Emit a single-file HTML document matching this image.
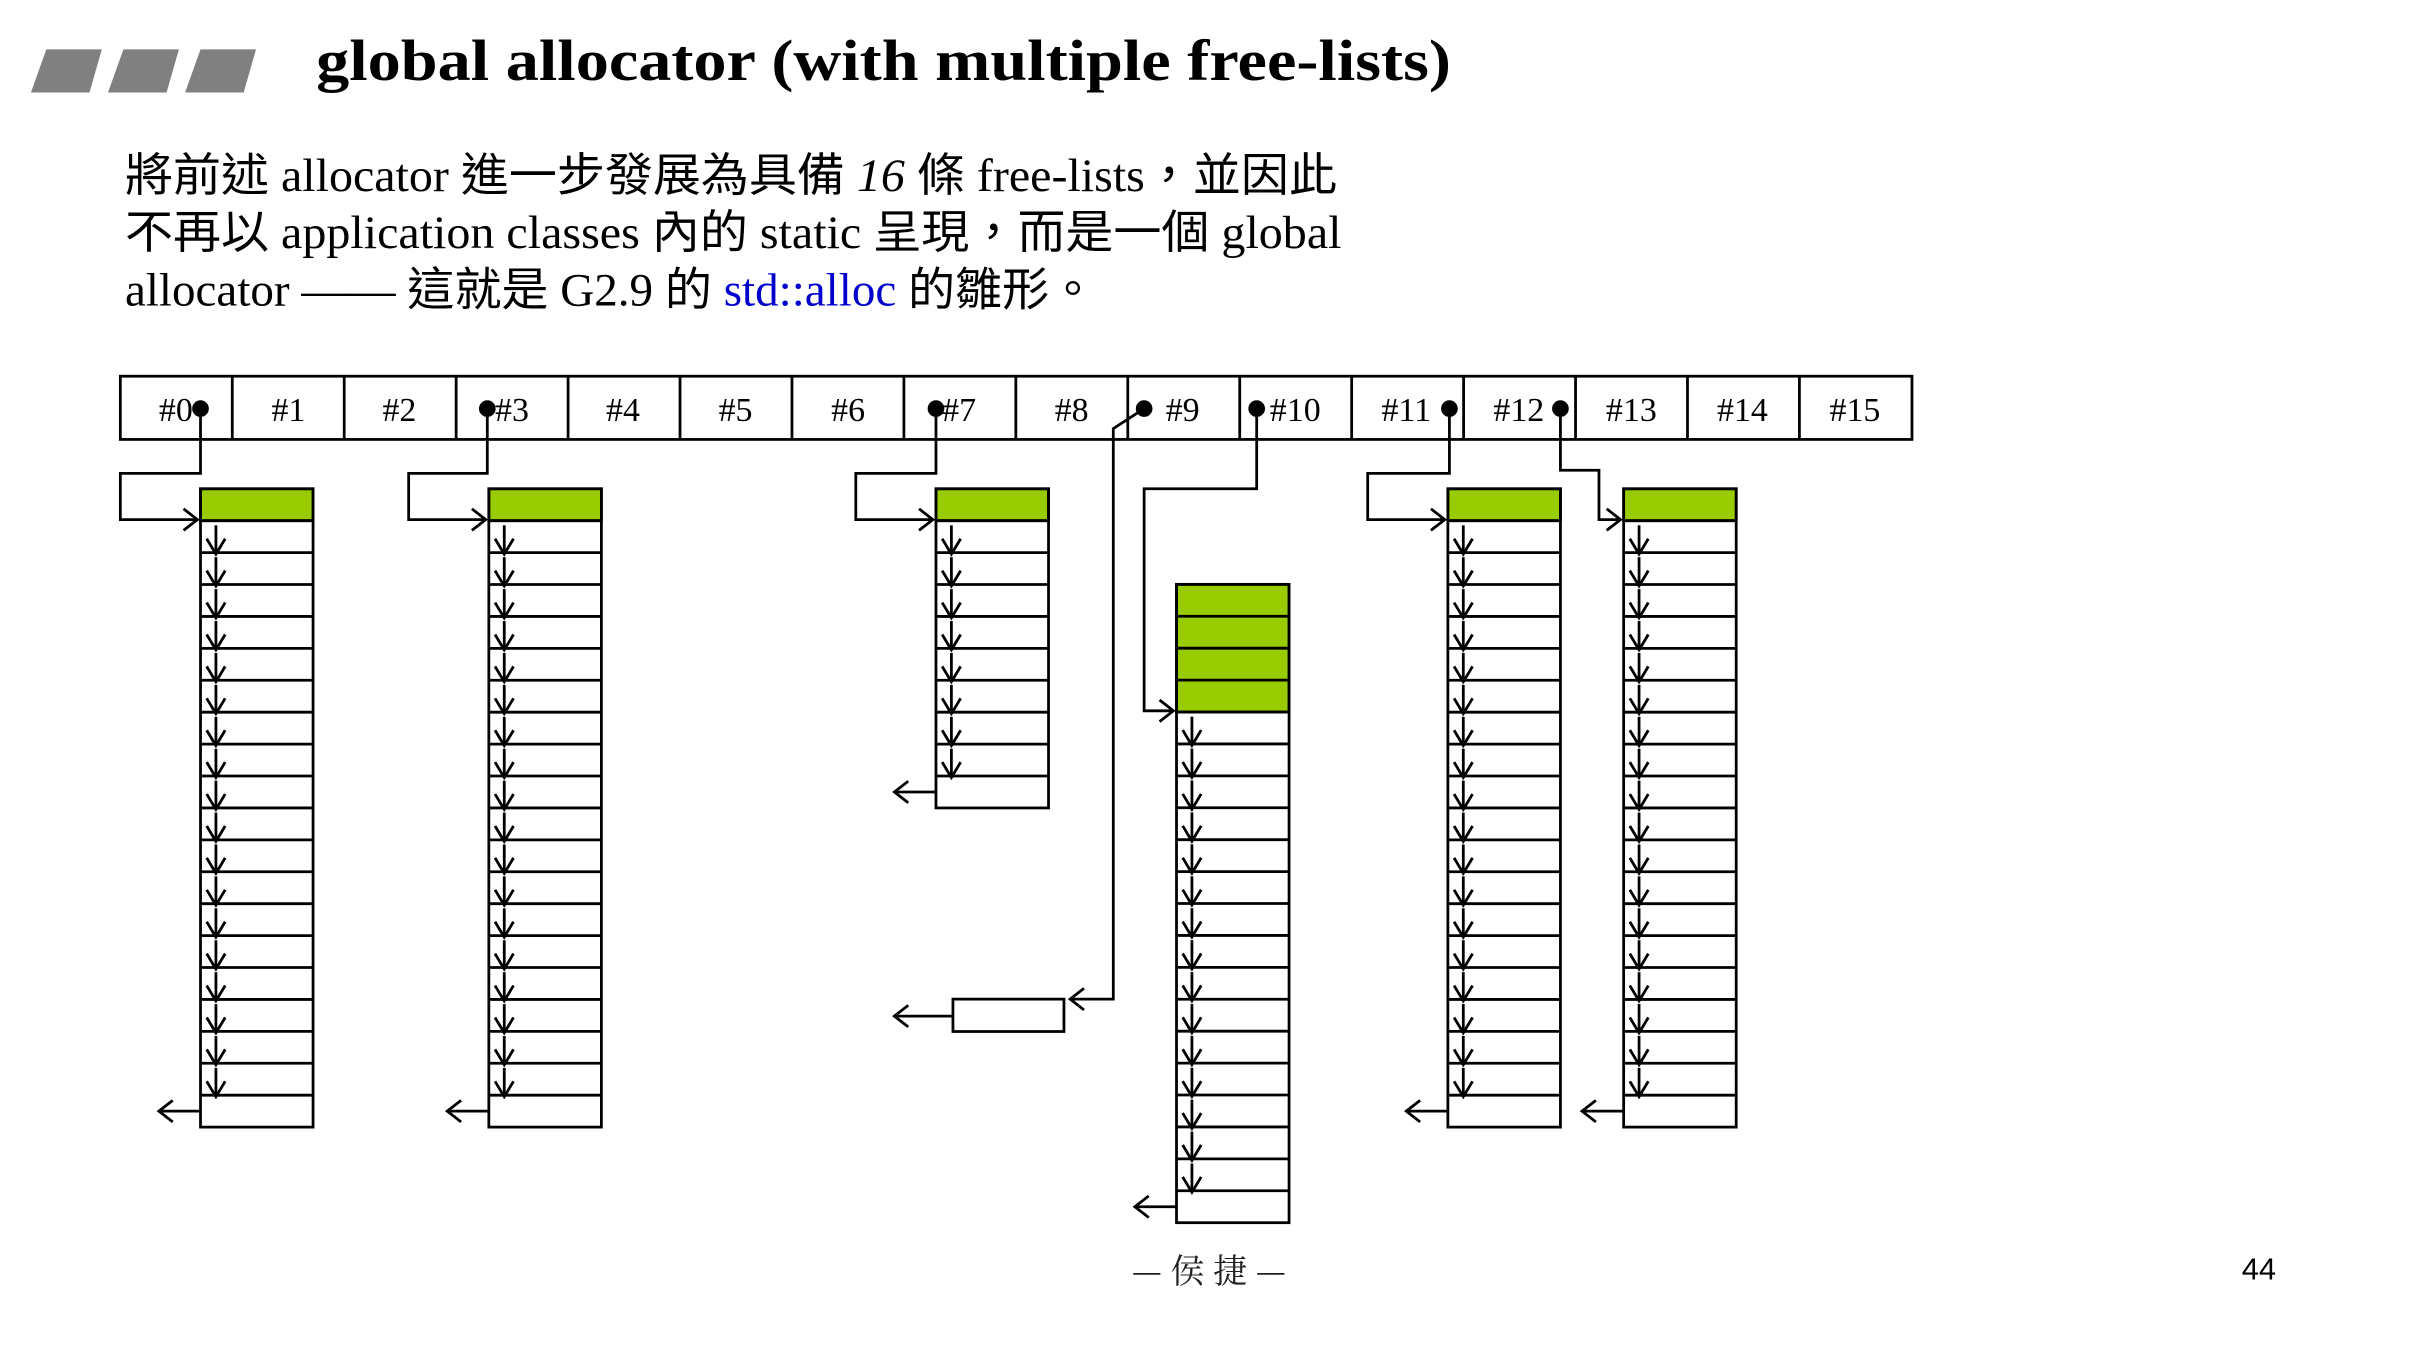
<!DOCTYPE html>
<html><head><meta charset="utf-8"><style>
html,body{margin:0;padding:0;background:#fff;width:2417px;height:1359px;overflow:hidden}
svg{display:block}
.t{font-family:"Liberation Serif","Noto Sans CJK TC",serif;fill:#000}
.c{font-family:"Liberation Serif",serif;font-size:22px;fill:#000}
</style></head><body>
<svg id="s" width="2417" height="1359" viewBox="0 0 1567.5 881.4" xmlns="http://www.w3.org/2000/svg">
<g fill="#808080">
<polygon points="30,32 66,32 58,60 20,60"/>
<polygon points="80,32 116,32 108,60 70,60"/>
<polygon points="130,32 166,32 158,60 120,60"/>
</g>
<text class="t" x="205" y="52" font-size="38" font-weight="bold" textLength="736" lengthAdjust="spacingAndGlyphs">global allocator (with multiple free-lists)</text>
<text class="t" x="81" y="124" font-size="30" textLength="786" lengthAdjust="spacingAndGlyphs">將前述 allocator 進一步發展為具備 <tspan font-style="italic">16</tspan> 條 free-lists，並因此</text>
<text class="t" x="81" y="161" font-size="30" textLength="789" lengthAdjust="spacingAndGlyphs">不再以 application classes 內的 static 呈現，而是一個 global</text>
<text class="t" x="81" y="198" font-size="30" textLength="630" lengthAdjust="spacingAndGlyphs">allocator —— 這就是 G2.9 的 <tspan fill="#0000cc">std::alloc</tspan> 的雛形。</text>
<g class="c" text-anchor="middle">
<text x="114" y="273">#0</text><text x="187" y="273">#1</text><text x="259" y="273">#2</text><text x="332" y="273">#3</text>
<text x="404" y="273">#4</text><text x="477" y="273">#5</text><text x="550" y="273">#6</text><text x="622" y="273">#7</text>
<text x="695" y="273">#8</text><text x="767" y="273">#9</text><text x="840" y="273">#10</text><text x="912" y="273">#11</text>
<text x="985" y="273">#12</text><text x="1058" y="273">#13</text><text x="1130" y="273">#14</text><text x="1203" y="273">#15</text>
</g>
<g id="g"></g>
<text x="784" y="832" text-anchor="middle" font-family="'Noto Serif CJK TC','Noto Serif CJK SC',serif" font-size="22" fill="#222">— 侯 捷 —</text>
<text x="1465" y="830" text-anchor="middle" font-family="'Liberation Sans',sans-serif" font-size="20" fill="#000">44</text>
</svg>
<script>
var s='',G='#99cc00',H=20.7;
function L(x1,y1,x2,y2){s+='<line x1="'+x1+'" y1="'+y1+'" x2="'+x2+'" y2="'+y2+'"/>';}
function P(d){s+='<polyline fill="none" points="'+d+'"/>';}
function head(x,y,dir){
 if(dir=='r')P((x-9)+','+(y-7)+' '+x+','+y+' '+(x-9)+','+(y+7));
 if(dir=='l')P((x+9)+','+(y-7)+' '+x+','+y+' '+(x+9)+','+(y+7));
 if(dir=='d')P((x-6)+','+(y-10)+' '+x+','+y+' '+(x+6)+','+(y-10));
}
s+='<rect x="78" y="244" width="1162" height="41" fill="none"/>';
for(var i=1;i<16;i++){var x=78+i*72.6;L(x,244,x,285);}
function col(x,y,ng,n){
 var w=73;
 s+='<rect x="'+x+'" y="'+y+'" width="'+w+'" height="'+(ng*H)+'" fill="'+G+'"/>';
 s+='<rect x="'+x+'" y="'+y+'" width="'+w+'" height="'+(n*H)+'" fill="none"/>';
 for(var k=1;k<n;k++)L(x,y+k*H,x+w,y+k*H);
 for(var k=ng;k<n-1;k++){var t=y+k*H;L(x+10,t+3,x+10,t+H+1);head(x+10,t+H+1,'d');}
 var ly=y+(n-1)*H+H/2;L(x,ly,x-27,ly);head(x-27,ly,'l');
}
col(130,317,1,20);col(317,317,1,20);col(607,317,1,10);col(763,379,4,20);col(939,317,1,20);col(1053,317,1,20);
s+='<rect x="618" y="648" width="72" height="21" fill="none"/>';
L(618,659,580,659);head(580,659,'l');
function dot(x,y){s+='<circle cx="'+x+'" cy="'+y+'" r="4.5" fill="#000"/>';}
dot(130,265);P('130,265 130,307 78,307 78,337 128,337');head(128,337,'r');
dot(316,265);P('316,265 316,307 265,307 265,337 315,337');head(315,337,'r');
dot(607,265);P('607,265 607,307 555,307 555,337 605,337');head(605,337,'r');
dot(742,265);P('742,265 722,278 722,648 694,648');head(694,648,'l');
dot(815,265);P('815,265 815,317 742,317 742,461 761,461');head(761,461,'r');
dot(940,265);P('940,265 940,307 887,307 887,337 937,337');head(937,337,'r');
dot(1012,265);P('1012,265 1012,305 1037,305 1037,337 1051,337');head(1051,337,'r');
document.getElementById('g').innerHTML='<g stroke="#000" stroke-width="1.8">'+s+'</g>';
</script>
</body></html>
